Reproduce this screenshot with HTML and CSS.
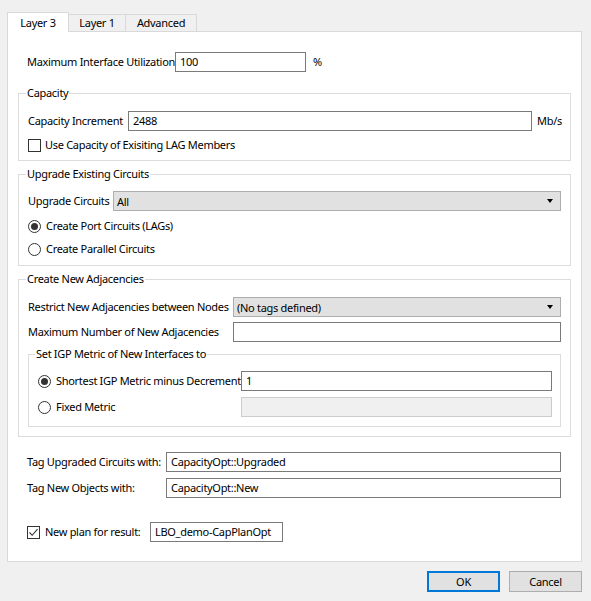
FILE: index.html
```html
<!DOCTYPE html>
<html>
<head>
<meta charset="utf-8">
<link rel="stylesheet" href="styles.css">
</head>
<body>
<div class="dialog">
  <div class="tabs">
    <div class="tab active t-l3">Layer 3</div>
    <div class="tab t-l1">Layer 1</div>
    <div class="tab t-adv">Advanced</div>
  </div>
  <div class="panel">
    <div class="row top-row r-util">
      <span class="lbl w-util">Maximum Interface Utilization</span>
      <span class="input w-util-in">100</span>
      <span class="unit pct">%</span>
    </div>

    <div class="group g-cap">
      <span class="legend">Capacity</span>
      <div class="row">
        <span class="lbl w-capinc">Capacity Increment</span>
        <span class="input grow">2488</span>
        <span class="unit mbs">Mb/s</span>
      </div>
      <div class="opt r-check">
        <span class="checkbox"></span>
        <span class="opt-text">Use Capacity of Exisiting LAG Members</span>
      </div>
    </div>

    <div class="group g-upg">
      <span class="legend">Upgrade Existing Circuits</span>
      <div class="row">
        <span class="lbl w-upg">Upgrade Circuits</span>
        <span class="select grow"><span class="sel-text">All</span><span class="arrow"></span></span>
      </div>
      <div class="opt r-radio1">
        <span class="radio checked"></span>
        <span class="opt-text radio-text">Create Port Circuits (LAGs)</span>
      </div>
      <div class="opt r-radio2">
        <span class="radio"></span>
        <span class="opt-text radio-text">Create Parallel Circuits</span>
      </div>
    </div>

    <div class="group g-adj">
      <span class="legend">Create New Adjacencies</span>
      <div class="row">
        <span class="lbl w-adj">Restrict New Adjacencies between Nodes</span>
        <span class="select grow"><span class="sel-text">(No tags defined)</span><span class="arrow"></span></span>
      </div>
      <div class="row r-maxnum">
        <span class="lbl w-adj">Maximum Number of New Adjacencies</span>
        <span class="input grow"></span>
      </div>
      <div class="group g-igp">
        <span class="legend legend-inner">Set IGP Metric of New Interfaces to</span>
        <div class="row">
          <span class="radio checked"></span>
          <span class="lbl radio-text w-igp">Shortest IGP Metric minus Decrement</span>
          <span class="input grow">1</span>
        </div>
        <div class="row r-fixed">
          <span class="radio"></span>
          <span class="lbl radio-text w-igp">Fixed Metric</span>
          <span class="input disabled grow"></span>
        </div>
      </div>
    </div>

    <div class="row plain r-tag1">
      <span class="lbl w-tag">Tag Upgraded Circuits with:</span>
      <span class="input grow">CapacityOpt::Upgraded</span>
    </div>
    <div class="row plain r-tag2">
      <span class="lbl w-tag">Tag New Objects with:</span>
      <span class="input grow">CapacityOpt::New</span>
    </div>

    <div class="row plain r-plan">
      <span class="checkbox checked">
        <svg viewBox="0 0 13 13" width="13" height="13"><polyline points="2.5,6.5 5.2,9.3 10.5,3.2" fill="none" stroke="#333" stroke-width="1.1"/></svg>
      </span>
      <span class="lbl plan-lbl">New plan for result:</span>
      <span class="input w-plan">LBO_demo-CapPlanOpt</span>
    </div>
  </div>
  <div class="buttons">
    <span class="btn default">OK</span>
    <span class="btn">Cancel</span>
  </div>
</div>
</body>
</html>
```

FILE: styles.css
```css
* { box-sizing: border-box; }

html, body {
  margin: 0;
  padding: 0;
  background: #f0f0f0;
}

body {
  width: 591px;
  height: 601px;
  overflow: hidden;
  font-family: "Noto Sans", "Open Sans", sans-serif;
  font-size: 11px;
  letter-spacing: -0.3px;
  line-height: 16px;
  color: #000;
}

.dialog {
  padding: 12px 9px 0 7px;
}

/* Tabs */
.tabs {
  display: flex;
  align-items: flex-end;
  height: 19px;
}

.tab {
  height: 17px;
  border: 1px solid #d9d9d9;
  border-bottom: none;
  background: #f0f0f0;
  text-align: center;
  line-height: 16px;
  margin-left: -1px;
}

.tab.active {
  position: relative;
  z-index: 1;
  height: 20px;
  margin-bottom: -1px;
  margin-left: 0;
  background: #fff;
  line-height: 20px;
}

.t-l3 { width: 62px; }
.t-l1 { width: 58px; }
.t-adv { width: 72px; }

/* Panel */
.panel {
  border: 1px solid #d9d9d9;
  background: #fff;
  padding: 0 10px 19px 10px;
}

.row {
  display: flex;
  align-items: center;
  height: 20px;
}

.top-row { margin-top: 20px; padding-left: 9px; }

.plain { padding: 0 10px 0 9px; }

.lbl { flex: none; white-space: nowrap; }

.w-util { width: 148px; }
.w-capinc { width: 100px; }
.w-upg { width: 85px; }
.w-adj { width: 205px; }
.w-igp { width: 185px; }
.w-tag { width: 139px; }

.input {
  height: 20px;
  border: 1px solid #7a7a7a;
  background: #fff;
  padding: 1px 4px 0 4px;
  line-height: 16px;
  white-space: nowrap;
}

.input.disabled {
  background: #f0f0f0;
  border-color: #cccccc;
}

.grow { flex: 1; }

.w-util-in { width: 131px; flex: none; }
.w-plan { width: 133px; flex: none; }

.unit { flex: none; }
.pct { margin-left: 7px; }
.mbs { width: 29px; padding-left: 5px; }

.select {
  position: relative;
  height: 20px;
  border: 1px solid #adadad;
  background: #e1e1e1;
  padding: 1px 4px 0 3px;
  line-height: 16px;
  display: flex;
  align-items: center;
}

.sel-text { flex: 1; white-space: nowrap; }

.arrow {
  flex: none;
  width: 0;
  height: 0;
  border-left: 3.5px solid transparent;
  border-right: 3.5px solid transparent;
  border-top: 4px solid #000;
  margin-right: 3px;
  margin-top: -1px;
}

/* Groups */
.group {
  position: relative;
  border: 1px solid #dcdcdc;
  padding: 0 9px;
}

.legend {
  position: absolute;
  top: -9px;
  left: 7px;
  padding: 0 1px;
  background: #fff;
  line-height: 16px;
  white-space: nowrap;
}

.legend-inner { left: 6px; }

.g-cap { margin-top: 21px; padding-top: 17px; padding-bottom: 8px; }
.g-upg { margin-top: 13px; padding-top: 16px; padding-bottom: 8px; }
.g-adj { margin-top: 13px; padding-top: 17px; padding-bottom: 9px; }
.g-igp { margin-top: 12px; padding: 16px 8px 9px 9px; }

.r-maxnum { margin-top: 5px; }
.r-fixed { margin-top: 6px; }

.opt {
  display: flex;
  align-items: center;
  height: 16px;
}

.r-check { margin-top: 7px; height: 14px; }
.r-radio1 { margin-top: 7px; }
.r-radio2 { margin-top: 7px; }

.r-tag1 { margin-top: 15px; }
.r-tag2 { margin-top: 6px; }
.r-plan { margin-top: 24px; }

.checkbox {
  flex: none;
  width: 13px;
  height: 13px;
  border: 1px solid #333;
  background: #fff;
  display: flex;
  align-items: center;
  justify-content: center;
}

.checkbox svg { flex: none; }

.opt-text { margin-left: 4px; white-space: nowrap; }

.radio {
  flex: none;
  width: 13px;
  height: 13px;
  border: 1px solid #333;
  border-radius: 50%;
  background: #fff;
  display: flex;
  align-items: center;
  justify-content: center;
}

.radio.checked::after {
  content: "";
  width: 7px;
  height: 7px;
  border-radius: 50%;
  background: #333;
}

.radio-text { margin-left: 5px; }

.plan-lbl { margin-left: 5px; width: 105px; }

/* Buttons */
.buttons {
  display: flex;
  justify-content: flex-end;
  gap: 9px;
  margin-top: 9px;
}

.btn {
  width: 73px;
  height: 21px;
  border: 1px solid #adadad;
  background: #e1e1e1;
  text-align: center;
  line-height: 19px;
}

.btn.default {
  border: 2px solid #0078d7;
  line-height: 17px;
}
```
